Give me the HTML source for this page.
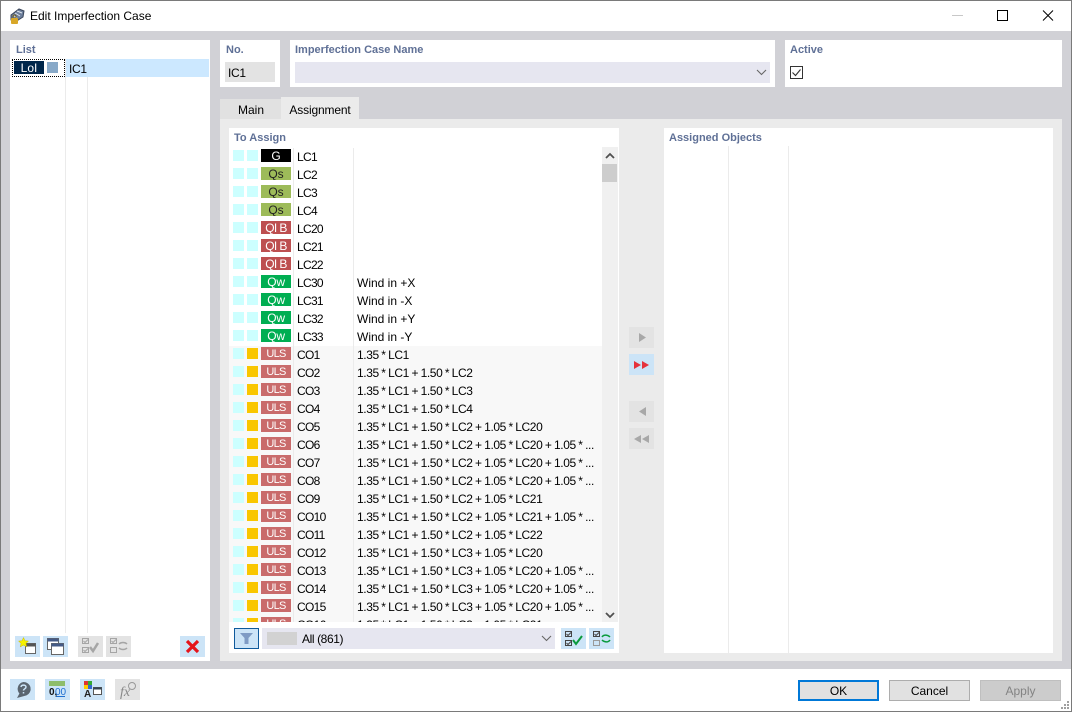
<!DOCTYPE html>
<html><head><meta charset="utf-8"><style>
html,body{margin:0;padding:0}
body{width:1072px;height:712px;overflow:hidden;position:relative;background:#fff;font:12px/16px "Liberation Sans",sans-serif;color:#000}
.a,.r span,.r i,.r b{position:absolute}
.h{position:absolute;font-weight:bold;color:#5f7096;font-size:11px;line-height:14px}
.p{position:absolute;background:#fff}
.r{position:absolute;left:0;width:373px;height:18px;white-space:nowrap}
.r.c{background:#f8f8f8}
.r i{top:2px;width:11px;height:11px;background:#ccffff}
.r i.s1{left:4px}.r i.s2{left:18px}
.r i.y{background:#f9c600}
.r b{left:32px;top:1px;width:30px;height:13px;font-weight:normal;text-align:center;font-size:12px;line-height:15px;overflow:hidden}
.r span.n{left:68px;top:0;line-height:18px;letter-spacing:-.7px}
.r span.d{left:128px;top:0;line-height:18px;width:245px;overflow:hidden}
.r.c span.d{letter-spacing:-.4px;word-spacing:-.4px}
.G{background:#000;color:#fff}.Q{background:#9dbb59;color:#222}.B{background:#bd4f50;color:#fff;letter-spacing:-.6px}.W{background:#00ae52;color:#fff;letter-spacing:-.3px}.U{background:#c96b6b;color:#fff;font-size:11px!important;letter-spacing:-.7px}
.t{position:absolute;width:25px;height:21px;background:#cce4f7}
.t.o{background:#e3e3e3}
.t svg,.ts{position:absolute;left:0;top:0}
.btn{position:absolute;top:680px;width:81px;height:21px;box-sizing:border-box;background:#e1e1e1;border:1px solid #adadad;text-align:center;line-height:21px}
</style></head><body>
<div class="a" style="left:0;top:31px;width:1072px;height:638px;background:#d1d1d6"></div>
<div class="a" style="left:0;top:0;width:1072px;height:712px;box-sizing:border-box;border:1px solid #7a7a7a;z-index:9;pointer-events:none"></div>

<svg class="a" style="left:8px;top:7px" width="18" height="18" viewBox="0 0 18 18"><path d="M3 8 L11 2 L16 4 L15 10 L7 15 L3 13Z" fill="#6d7f9c" stroke="#39455a"/><path d="M9 4l5 2M7 6l5 3M5 8l4 3" stroke="#dfe5ee" stroke-width="1"/><rect x="3" y="11" width="7" height="6" rx="1" fill="#d8a728"/><path d="M5 11V9.500a1.500 1.500 0 0 1 3 0V11" fill="none" stroke="#6b5a20"/></svg>
<div class="a" style="left:30px;top:8px;font-size:12px">Edit Imperfection Case</div>
<div class="a" style="left:952px;top:15px;width:11px;height:1px;background:#c8c8c8"></div>
<div class="a" style="left:997px;top:10px;width:9px;height:9px;border:1px solid #000"></div>
<svg class="a" style="left:1042px;top:10px" width="12" height="11"><path d="M1 .5l10 10M11 .5l-10 10" stroke="#000" stroke-width="1"/></svg>

<div class="p" style="left:10px;top:40px;width:200px;height:621px"></div>
<div class="h" style="left:16px;top:43px">List</div>
<div class="a" style="left:65px;top:59px;width:1px;height:574px;background:#ebebeb"></div>
<div class="a" style="left:87px;top:59px;width:1px;height:574px;background:#ebebeb"></div>
<div class="a" style="left:66px;top:59px;width:143px;height:18px;background:#cce8ff"></div>
<div class="a" style="left:12px;top:59px;width:53px;height:18px;box-sizing:border-box;border:1px dotted #000"></div>
<div class="a" style="left:14px;top:61px;width:30px;height:13px;background:#00264a;color:#fff;text-align:center;line-height:14px">LoI</div>
<div class="a" style="left:47px;top:62px;width:11px;height:11px;background:#88a9c8"></div>
<div class="a" style="left:69px;top:61px;letter-spacing:-.3px">IC1</div>

<div class="t" style="left:15px;top:636px"><svg width="25" height="21"><rect x="10.500" y="7.500" width="10" height="10" fill="#fff" stroke="#666"/><rect x="10.500" y="7.500" width="10" height="3" fill="#555"/><path d="M8.500 1.500l1.500 3.300 3.500.3-2.600 2.300.8 3.500-3.200-1.900-3.200 1.900.8-3.500L3.500 5.100 7 4.800z" fill="#f6f200" stroke="#c9b900" stroke-width=".5"/></svg></div>
<div class="t" style="left:43px;top:636px"><svg width="25" height="21"><rect x="4.500" y="2.500" width="11" height="11" fill="#fff" stroke="#666"/><rect x="4.500" y="2.500" width="11" height="3" fill="#445a86"/><rect x="8.500" y="7.500" width="12" height="11" fill="#fff" stroke="#666"/><rect x="8.500" y="7.500" width="12" height="3" fill="#445a86"/></svg></div>
<div class="t o" style="left:78px;top:636px"><svg width="25" height="21" fill="none" stroke="#a5a5a5"><rect x="4.500" y="2.500" width="6" height="5"/><path d="M5.500 5l1.500 1.500 3-3"/><rect x="4.500" y="11.500" width="6" height="5"/><path d="M5.500 14l1.500 1.500 3-3"/><path d="M12 11l3 4 5-8" stroke-width="2.500"/></svg></div>
<div class="t o" style="left:106px;top:636px"><svg width="25" height="21" fill="none" stroke="#a5a5a5"><rect x="4.500" y="2.500" width="6" height="5"/><path d="M5.500 5l1.500 1.500 3-3"/><rect x="4.500" y="11.500" width="6" height="5"/><path d="M13 8c2-2 6-2 8 0M21 12c-2 2-6 2-8 0" stroke-width="1.500"/></svg></div>
<div class="t" style="left:180px;top:636px"><svg width="25" height="21"><path d="M7 5l11 11M18 5L7 16" stroke="#e5141b" stroke-width="3.200"/></svg></div>

<div class="p" style="left:220px;top:40px;width:60px;height:47px"></div>
<div class="h" style="left:226px;top:43px">No.</div>
<div class="a" style="left:225px;top:62px;width:50px;height:20px;background:#e3e3e3;line-height:22px;text-indent:3px;letter-spacing:-.3px">IC1</div>

<div class="p" style="left:290px;top:40px;width:485px;height:47px"></div>
<div class="h" style="left:295px;top:43px">Imperfection Case Name</div>
<div class="a" style="left:295px;top:62px;width:475px;height:21px;background:#e6e6f0"></div>
<svg class="a" style="left:756px;top:69px" width="11" height="7"><path d="M1 1l4.500 4.500L10 1" fill="none" stroke="#666" stroke-width="1.100"/></svg>

<div class="p" style="left:785px;top:40px;width:277px;height:47px"></div>
<div class="h" style="left:790px;top:43px">Active</div>
<div class="a" style="left:790px;top:66px;width:11px;height:11px;border:1px solid #333;background:#fff"></div>
<svg class="a" style="left:790px;top:66px" width="13" height="13"><path d="M2.500 6.500l3 3 5-6" fill="none" stroke="#333" stroke-width="1.100"/></svg>

<div class="a" style="left:221px;top:99px;width:60px;height:20px;background:#e1e1e1;text-align:center;line-height:22px">Main</div>
<div class="a" style="left:220px;top:99px;width:1px;height:20px;background:#e1e1e1"></div>
<div class="a" style="left:281px;top:97px;width:78px;height:22px;background:#ebebeb;text-align:center;line-height:26px;letter-spacing:-.15px">Assignment</div>
<div class="a" style="left:220px;top:119px;width:842px;height:542px;background:#ebebeb"></div>

<div class="p" style="left:229px;top:128px;width:390px;height:525px"></div>
<div class="h" style="left:234px;top:131px">To Assign</div>

<div class="a" style="left:229px;top:148px;width:373px;height:474px;overflow:hidden">
<div class="r" style="top:0"><i class="s1"></i><i class="s2"></i><b class="G">G</b><span class="n">LC1</span></div>
<div class="r" style="top:18px"><i class="s1"></i><i class="s2"></i><b class="Q">Qs</b><span class="n">LC2</span></div>
<div class="r" style="top:36px"><i class="s1"></i><i class="s2"></i><b class="Q">Qs</b><span class="n">LC3</span></div>
<div class="r" style="top:54px"><i class="s1"></i><i class="s2"></i><b class="Q">Qs</b><span class="n">LC4</span></div>
<div class="r" style="top:72px"><i class="s1"></i><i class="s2"></i><b class="B">QI B</b><span class="n">LC20</span></div>
<div class="r" style="top:90px"><i class="s1"></i><i class="s2"></i><b class="B">QI B</b><span class="n">LC21</span></div>
<div class="r" style="top:108px"><i class="s1"></i><i class="s2"></i><b class="B">QI B</b><span class="n">LC22</span></div>
<div class="r" style="top:126px"><i class="s1"></i><i class="s2"></i><b class="W">Qw</b><span class="n">LC30</span><span class="d">Wind in +X</span></div>
<div class="r" style="top:144px"><i class="s1"></i><i class="s2"></i><b class="W">Qw</b><span class="n">LC31</span><span class="d">Wind in -X</span></div>
<div class="r" style="top:162px"><i class="s1"></i><i class="s2"></i><b class="W">Qw</b><span class="n">LC32</span><span class="d">Wind in +Y</span></div>
<div class="r" style="top:180px"><i class="s1"></i><i class="s2"></i><b class="W">Qw</b><span class="n">LC33</span><span class="d">Wind in -Y</span></div>
<div class="r c" style="top:198px"><i class="s1"></i><i class="s2 y"></i><b class="U">ULS</b><span class="n">CO1</span><span class="d">1.35 * LC1</span></div>
<div class="r c" style="top:216px"><i class="s1"></i><i class="s2 y"></i><b class="U">ULS</b><span class="n">CO2</span><span class="d">1.35 * LC1 + 1.50 * LC2</span></div>
<div class="r c" style="top:234px"><i class="s1"></i><i class="s2 y"></i><b class="U">ULS</b><span class="n">CO3</span><span class="d">1.35 * LC1 + 1.50 * LC3</span></div>
<div class="r c" style="top:252px"><i class="s1"></i><i class="s2 y"></i><b class="U">ULS</b><span class="n">CO4</span><span class="d">1.35 * LC1 + 1.50 * LC4</span></div>
<div class="r c" style="top:270px"><i class="s1"></i><i class="s2 y"></i><b class="U">ULS</b><span class="n">CO5</span><span class="d">1.35 * LC1 + 1.50 * LC2 + 1.05 * LC20</span></div>
<div class="r c" style="top:288px"><i class="s1"></i><i class="s2 y"></i><b class="U">ULS</b><span class="n">CO6</span><span class="d">1.35 * LC1 + 1.50 * LC2 + 1.05 * LC20 + 1.05 * ...</span></div>
<div class="r c" style="top:306px"><i class="s1"></i><i class="s2 y"></i><b class="U">ULS</b><span class="n">CO7</span><span class="d">1.35 * LC1 + 1.50 * LC2 + 1.05 * LC20 + 1.05 * ...</span></div>
<div class="r c" style="top:324px"><i class="s1"></i><i class="s2 y"></i><b class="U">ULS</b><span class="n">CO8</span><span class="d">1.35 * LC1 + 1.50 * LC2 + 1.05 * LC20 + 1.05 * ...</span></div>
<div class="r c" style="top:342px"><i class="s1"></i><i class="s2 y"></i><b class="U">ULS</b><span class="n">CO9</span><span class="d">1.35 * LC1 + 1.50 * LC2 + 1.05 * LC21</span></div>
<div class="r c" style="top:360px"><i class="s1"></i><i class="s2 y"></i><b class="U">ULS</b><span class="n">CO10</span><span class="d">1.35 * LC1 + 1.50 * LC2 + 1.05 * LC21 + 1.05 * ...</span></div>
<div class="r c" style="top:378px"><i class="s1"></i><i class="s2 y"></i><b class="U">ULS</b><span class="n">CO11</span><span class="d">1.35 * LC1 + 1.50 * LC2 + 1.05 * LC22</span></div>
<div class="r c" style="top:396px"><i class="s1"></i><i class="s2 y"></i><b class="U">ULS</b><span class="n">CO12</span><span class="d">1.35 * LC1 + 1.50 * LC3 + 1.05 * LC20</span></div>
<div class="r c" style="top:414px"><i class="s1"></i><i class="s2 y"></i><b class="U">ULS</b><span class="n">CO13</span><span class="d">1.35 * LC1 + 1.50 * LC3 + 1.05 * LC20 + 1.05 * ...</span></div>
<div class="r c" style="top:432px"><i class="s1"></i><i class="s2 y"></i><b class="U">ULS</b><span class="n">CO14</span><span class="d">1.35 * LC1 + 1.50 * LC3 + 1.05 * LC20 + 1.05 * ...</span></div>
<div class="r c" style="top:450px"><i class="s1"></i><i class="s2 y"></i><b class="U">ULS</b><span class="n">CO15</span><span class="d">1.35 * LC1 + 1.50 * LC3 + 1.05 * LC20 + 1.05 * ...</span></div>
<div class="r c" style="top:468px"><i class="s1"></i><i class="s2 y"></i><b class="U">ULS</b><span class="n">CO16</span><span class="d">1.35 * LC1 + 1.50 * LC3 + 1.05 * LC21</span></div>
<div class="a" style="left:64px;top:0;width:1px;height:474px;background:#ebebeb"></div>
<div class="a" style="left:124px;top:0;width:1px;height:474px;background:#ebebeb"></div>
</div>

<div class="a" style="left:602px;top:147px;width:16px;height:475px;background:#f0f0f0"></div>
<div class="a" style="left:602px;top:164px;width:15px;height:18px;background:#cdcdcd"></div>
<svg class="a" style="left:605px;top:152px" width="10" height="8"><path d="M1 6l4-4 4 4" fill="none" stroke="#505050" stroke-width="1.800"/></svg>
<svg class="a" style="left:605px;top:611px" width="10" height="8"><path d="M1 2l4 4 4-4" fill="none" stroke="#505050" stroke-width="1.800"/></svg>

<div class="t" style="left:234px;top:628px;box-sizing:border-box;border:1px solid #0f5a9c"><svg width="23" height="19"><path d="M5 4h13l-4.500 5v6h-4v-6z" fill="#7f9bc4"/></svg></div>
<div class="a" style="left:262px;top:628px;width:293px;height:21px;background:#e6e6f0"></div>
<div class="a" style="left:267px;top:632px;width:30px;height:13px;background:#d2d2d2"></div>
<div class="a" style="left:302px;top:631px;letter-spacing:-.4px">All (861)</div>
<svg class="a" style="left:541px;top:635px" width="11" height="7"><path d="M1 1l4.500 4.500L10 1" fill="none" stroke="#666" stroke-width="1.100"/></svg>
<div class="t" style="left:561px;top:628px"><svg width="25" height="21" fill="none" stroke="#444"><rect x="4.500" y="3.500" width="6" height="5"/><path d="M5.500 6l1.500 1.500 3-3" stroke-width="1"/><rect x="4.500" y="12.500" width="6" height="5"/><path d="M5.500 15l1.500 1.500 3-3" stroke-width="1"/><path d="M12 12l3 4 6-8" stroke="#0a9a3c" stroke-width="2"/></svg></div>
<div class="t" style="left:589px;top:628px"><svg width="25" height="21" fill="none" stroke="#444"><rect x="4.500" y="3.500" width="6" height="5"/><path d="M5.500 6l1.500 1.500 3-3" stroke-width="1"/><rect x="4.500" y="12.500" width="6" height="5" stroke="#999"/><path d="M13 9c2-3 6-2 8 0M21 12c-2 3-6 2-8 0" stroke="#0a9a3c" stroke-width="1.500"/></svg></div>

<div class="t o" style="left:629px;top:327px"><svg width="25" height="21"><path d="M10 6l7 4.500-7 4.500z" fill="#a8a8a8"/></svg></div>
<div class="t" style="left:629px;top:354px"><svg width="25" height="21"><path d="M5 7l7 4-7 4zM13 7l7 4-7 4z" fill="#e5323c"/></svg></div>
<div class="t o" style="left:629px;top:401px"><svg width="25" height="21"><path d="M17 6l-7 4.500 7 4.500z" fill="#a8a8a8"/></svg></div>
<div class="t o" style="left:629px;top:428px"><svg width="25" height="21"><path d="M12 7l-7 4 7 4zM20 7l-7 4 7 4z" fill="#a8a8a8"/></svg></div>

<div class="p" style="left:664px;top:128px;width:389px;height:525px"></div>
<div class="h" style="left:669px;top:131px">Assigned Objects</div>
<div class="a" style="left:728px;top:146px;width:1px;height:507px;background:#ebebeb"></div>
<div class="a" style="left:788px;top:146px;width:1px;height:507px;background:#ebebeb"></div>

<div class="t" style="left:10px;top:679px"><svg width="25" height="21"><path d="M13.500 3a7 7 0 0 1 3 13.400L7 19l2.400-4.500A7 7 0 0 1 13.500 3z" fill="#5a6570"/><path d="M11 8c.3-2.500 5-2.500 5 0 0 1.800-2.500 1.800-2.500 3.500M13.500 13v1.500" fill="none" stroke="#cce4f7" stroke-width="1.500"/></svg></div>
<div class="t" style="left:45px;top:679px"><svg width="25" height="21"><rect x="4" y="2" width="16" height="5" fill="#8dbd6a"/><rect x="11" y="17" width="9" height="1" fill="#1f6fd0"/><text x="4" y="16" font-size="10" font-weight="bold" font-family="Liberation Sans,sans-serif" fill="#111">0,</text><text x="10" y="16" font-size="10" font-family="Liberation Sans,sans-serif" fill="#1f6fd0">00</text></svg></div>
<div class="t" style="left:80px;top:679px"><svg width="25" height="21"><rect x="4" y="2" width="4" height="4" fill="#d33"/><rect x="8" y="2" width="4" height="4" fill="#3a3"/><rect x="4" y="6" width="4" height="4" fill="#fc0"/><rect x="8" y="6" width="4" height="4" fill="#36c"/><rect x="13.500" y="8.500" width="8" height="7" fill="#fff" stroke="#555"/><rect x="13.500" y="8.500" width="8" height="2" fill="#345"/><text x="4" y="18" font-size="10" font-weight="bold" font-family="Liberation Sans,sans-serif" fill="#222">A</text></svg></div>
<div class="t o" style="left:115px;top:679px"><svg width="25" height="21"><text x="5" y="17" font-size="14" font-style="italic" font-family="Liberation Serif,serif" fill="#888">fx</text><circle cx="17" cy="7" r="3.500" fill="none" stroke="#999"/></svg></div>

<div class="btn" style="left:798px;border:2px solid #0078d7;line-height:19px">OK</div>
<div class="btn" style="left:889px">Cancel</div>
<div class="btn" style="left:980px;background:#ccc;color:#838383;border-color:#bfbfbf">Apply</div>
<svg class="a" style="left:1060px;top:700px" width="10" height="10" fill="#a0a0a0"><rect x="7" y="1" width="2" height="2"/><rect x="4" y="4" width="2" height="2"/><rect x="7" y="4" width="2" height="2"/><rect x="1" y="7" width="2" height="2"/><rect x="4" y="7" width="2" height="2"/><rect x="7" y="7" width="2" height="2"/></svg>
</body></html>
